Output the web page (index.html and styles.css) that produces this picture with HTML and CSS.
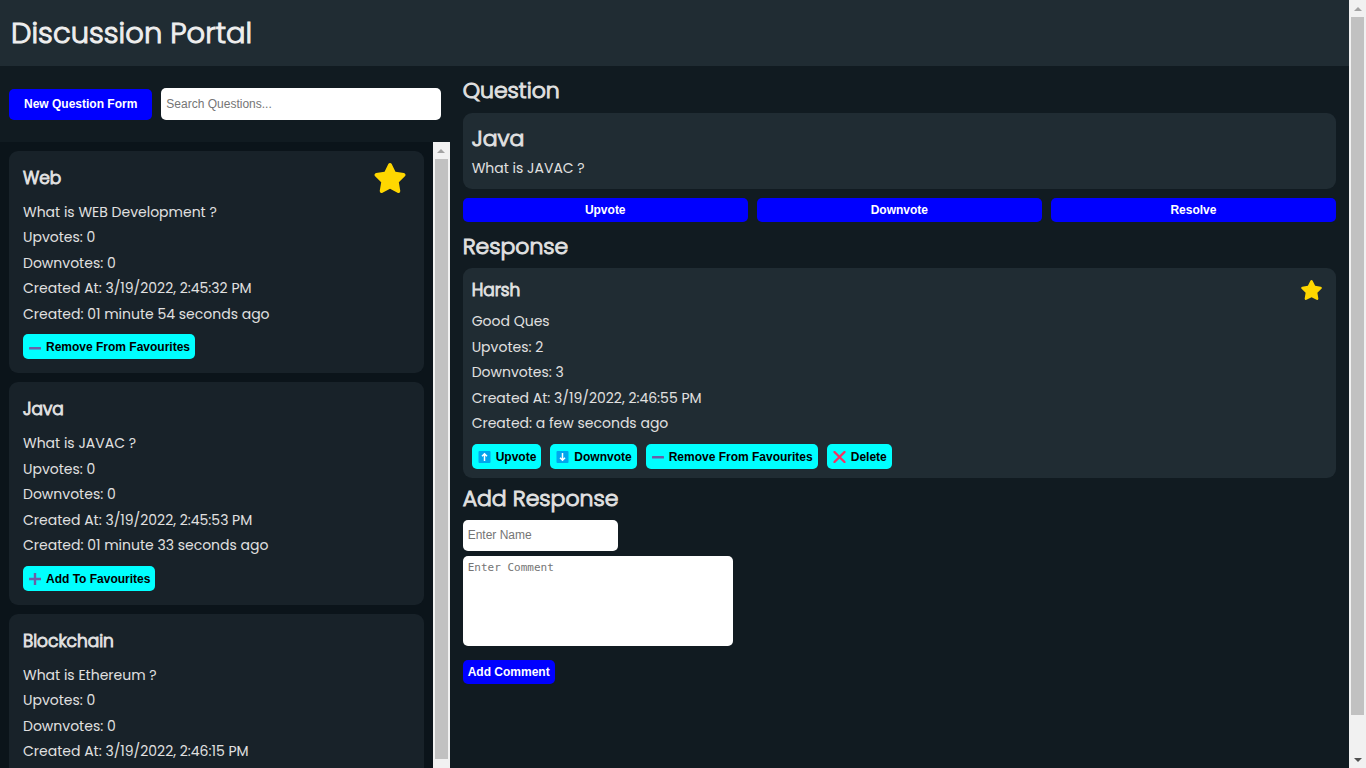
FILE: index.html
```html
<!DOCTYPE html>
<html lang="en">
<head>
<meta charset="utf-8">
<title>Discussion Portal</title>
<link rel="stylesheet" href="styles.css">
</head>
<body>
<svg class="defs" aria-hidden="true">
  <symbol id="star" viewBox="0 0 576 512"><path fill="#ffd700" d="M316.9 18C311.6 7 300.4 0 288.1 0s-23.4 7-28.8 18L195 150.3 51.4 171.5c-12 1.8-22 10.2-25.7 21.7s-.7 24.2 7.9 32.7L137.8 329 113.2 474.7c-2 12 3 24.2 12.9 31.3s23 8 33.8 2.3l128.3-68.5 128.3 68.5c10.8 5.7 23.9 4.9 33.8-2.3s14.9-19.3 12.9-31.3L438.5 329 542.7 225.9c8.6-8.5 11.7-21.2 7.9-32.7s-13.7-19.9-25.7-21.7L381.2 150.3 316.9 18z"/></symbol>
  <symbol id="minus" viewBox="0 0 12 12"><rect y="5" width="12" height="2.500" rx=".5" fill="#6b5fa8"/></symbol>
  <symbol id="plus" viewBox="0 0 12 12"><path d="M0 6h12M6 0v12" stroke="#6b5fa8" stroke-width="2.400"/></symbol>
  <symbol id="up" viewBox="0 0 12 12"><rect width="12" height="12" rx="1" fill="#00a6ed"/><path d="M6 10V3M3.5 5.3 6 2.8l2.500 2.500" fill="none" stroke="#fff" stroke-width="1.500"/></symbol>
  <symbol id="down" viewBox="0 0 12 12"><rect width="12" height="12" rx="1" fill="#00a6ed"/><path d="M6 2v7M3.500 6.700 6 9.200l2.500-2.500" fill="none" stroke="#fff" stroke-width="1.500"/></symbol>
  <symbol id="cross" viewBox="0 0 12 12"><path d="M1 1l10 10M11 1 1 11" stroke="#f92f60" stroke-width="2.300" stroke-linecap="round"/></symbol>
</svg>
<div class="app">
  <header class="header"><h1>Discussion Portal</h1></header>
  <div class="columns">
    <aside class="sidebar">
      <div class="toolbar">
        <button class="btn btn-new" type="button">New Question Form</button>
        <input class="field search" type="text" placeholder="Search Questions..." aria-label="Search Questions">
      </div>
      <div class="list-wrap">
        <div class="list">
          <article class="card item">
            <div class="item-head"><h3>Web</h3><svg class="star-lg"><use href="#star"/></svg></div>
            <p>What is WEB Development ?</p>
            <p>Upvotes: 0</p>
            <p>Downvotes: 0</p>
            <p>Created At: 3/19/2022, 2:45:32 PM</p>
            <p>Created: 01 minute 54 seconds ago</p>
            <div class="actions"><button class="chip" type="button"><svg><use href="#minus"/></svg>Remove From Favourites</button></div>
          </article>
          <article class="card item">
            <div class="item-head"><h3>Java</h3></div>
            <p>What is JAVAC ?</p>
            <p>Upvotes: 0</p>
            <p>Downvotes: 0</p>
            <p>Created At: 3/19/2022, 2:45:53 PM</p>
            <p>Created: 01 minute 33 seconds ago</p>
            <div class="actions"><button class="chip" type="button"><svg><use href="#plus"/></svg>Add To Favourites</button></div>
          </article>
          <article class="card item">
            <div class="item-head"><h3>Blockchain</h3></div>
            <p>What is Ethereum ?</p>
            <p>Upvotes: 0</p>
            <p>Downvotes: 0</p>
            <p>Created At: 3/19/2022, 2:46:15 PM</p>
          </article>
        </div>
        <div class="scrollbar scrollbar-list" aria-hidden="true">
          <span class="arrow arrow-up"></span><span class="thumb"></span>
        </div>
      </div>
    </aside>
    <main class="main">
      <h2>Question</h2>
      <section class="card question">
        <h2>Java</h2>
        <p>What is JAVAC ?</p>
      </section>
      <div class="votes">
        <button class="btn" type="button">Upvote</button>
        <button class="btn" type="button">Downvote</button>
        <button class="btn" type="button">Resolve</button>
      </div>
      <h2>Response</h2>
      <section class="card response">
        <div class="response-head"><h3>Harsh</h3><svg class="star-sm"><use href="#star"/></svg></div>
        <p>Good Ques</p>
        <p>Upvotes: 2</p>
        <p>Downvotes: 3</p>
        <p>Created At: 3/19/2022, 2:46:55 PM</p>
        <p>Created: a few seconds ago</p>
        <div class="actions">
          <button class="chip" type="button"><svg class="wide"><use href="#up"/></svg>Upvote</button>
          <button class="chip" type="button"><svg class="wide"><use href="#down"/></svg>Downvote</button>
          <button class="chip" type="button"><svg><use href="#minus"/></svg>Remove From Favourites</button>
          <button class="chip" type="button"><svg class="wide"><use href="#cross"/></svg>Delete</button>
        </div>
      </section>
      <h2>Add Response</h2>
      <form class="form">
        <input class="field name" type="text" placeholder="Enter Name" aria-label="Name">
        <textarea class="field comment" placeholder="Enter Comment" aria-label="Comment"></textarea>
        <button class="btn btn-add" type="button">Add Comment</button>
      </form>
    </main>
  </div>
</div>
<div class="scrollbar scrollbar-page" aria-hidden="true">
  <span class="arrow arrow-up"></span><span class="thumb"></span><span class="gap"></span><span class="arrow arrow-down"></span>
</div>
</body>
</html>
```
FILE: styles.css
```css
* { box-sizing: border-box; }
body {
  margin: 0;
  height: 100vh;
  display: flex;
  overflow: hidden;
  background: #111b21;
  color: #e0e0e0;
  font: 400 14px/1.82 Poppins, Inter, sans-serif;
}
h1, h2, h3, p { margin: 0; }
h1, h2, h3 { font-weight: 300; -webkit-text-stroke: 1px currentColor; }
.defs { position: absolute; width: 0; height: 0; }

.app { flex: 1; min-width: 0; display: flex; flex-direction: column; }
.header { background: #202c33; padding: 9px 11px; }
h1 { font-size: 29px; line-height: 48px; color: #eee; }
h2 { font-size: 22px; line-height: 34px; }
h3 { font-size: 17px; line-height: 28px; }
.columns { flex: 1; min-height: 0; display: grid; grid-template-columns: 1fr 2fr; }

.sidebar { min-width: 0; min-height: 0; display: flex; flex-direction: column; }
.toolbar { display: flex; align-items: center; gap: 9px; padding: 22px 9px; }
.list-wrap { flex: 1; min-height: 0; display: flex; background: #0b141a; }
.list { flex: 1; min-width: 0; overflow: hidden; padding: 9px; display: flex; flex-direction: column; gap: 9px; }
.card { border-radius: 9px; background: #202c33; }
.item { flex: none; background: #182229; padding: 12px 14px 14px; }
.item-head { display: flex; align-items: center; justify-content: space-between; height: 30px; margin-bottom: 7px; padding-right: 3px; }
.star-lg { width: 34px; height: 30px; }
.star-sm { width: 23px; height: 20px; }

.btn, .chip {
  border: 0;
  border-radius: 5px;
  font: bold 12px/15px "Liberation Sans", Arial, sans-serif;
  cursor: pointer;
}
.btn { background: #00f; color: #fff; padding: 5px 5px 4px; }
.btn-new { padding: 8px 15px; }
.field {
  border: 0;
  border-radius: 5px;
  background: #fff;
  padding: 5px;
  font: 12px/15px "Liberation Sans", Arial, sans-serif;
}
.field::placeholder { color: #757575; }
.search { flex: 1; min-width: 0; height: 32px; }
.actions { display: flex; gap: 9px; margin-top: 7px; }
.chip { display: flex; align-items: center; gap: 5px; padding: 6px 5px 4px 6px; background: #0ff; color: #000; }
.chip svg { width: 12px; height: 12px; }
.chip .wide { width: 13px; }

.main { min-width: 0; padding: 8px 13px; }
.question { margin-top: 5px; padding: 9px 9px 8px; }
.votes { display: grid; grid-template-columns: repeat(3, 1fr); gap: 9px; margin: 9px 0 8px; }
.response { margin: 4px 0; padding: 8px 9px 9px; }
.response-head { display: flex; align-items: center; justify-content: space-between; margin-bottom: 5px; padding-right: 4px; }
.form { display: flex; flex-direction: column; align-items: flex-start; gap: 5px; margin-top: 4px; }
.name { width: 155px; height: 31px; }
.comment { width: 270px; height: 90px; resize: none; font-family: "DejaVu Sans Mono", monospace; font-size: 11px; line-height: 13px; }
.btn-add { margin-top: 9px; }

.scrollbar { flex: none; width: 17px; background: #f1f1f1; display: flex; flex-direction: column; align-items: center; }
.scrollbar-list { padding-bottom: 9px; }
.thumb { width: 13px; flex: 698; background: #c1c1c1; }
.gap { flex: 36; }
.arrow { height: 17px; display: flex; align-items: center; }
.arrow::before { content: ""; border: 4px solid transparent; }
.arrow-up::before { border-top: 0; border-bottom-color: #a3a3a3; }
.arrow-down::before { border-bottom: 0; border-top-color: #505050; }
```
